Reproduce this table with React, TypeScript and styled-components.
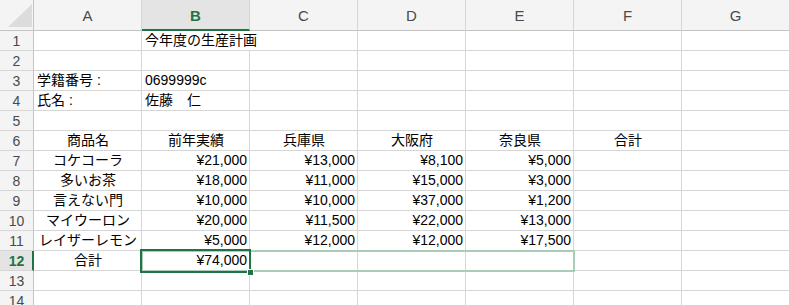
import React from "react";
import styled, { createGlobalStyle } from "styled-components";

const GlobalStyle = createGlobalStyle`
  html, body {
    margin: 0;
    padding: 0;
    background: #ffffff;
    overflow: hidden;
  }
  body {
    font-family: "Liberation Sans", "Noto Sans CJK JP", sans-serif;
  }
`;

const EXCEL_GREEN = "#217346";
const GRID = "#d6d6d6";

const Sheet = styled.div`
  position: relative;
  display: grid;
  grid-template-columns: 34px repeat(7, 108px);
  grid-template-rows: 31px repeat(14, 20px);
  width: 790px;
  height: 311px;
  background: #ffffff;
`;

const Corner = styled.div`
  position: relative;
  background: #f4f4f4;
  border-right: 1px solid #c4c4c4;
  border-bottom: 1px solid #c4c4c4;
  &::after {
    content: "";
    position: absolute;
    right: 1px;
    bottom: 3px;
    width: 24px;
    height: 23px;
    background: #dcdcdc;
    clip-path: polygon(100% 0, 100% 100%, 0 100%);
  }
`;

const ColHead = styled.div<{ $active?: boolean }>`
  display: flex;
  align-items: center;
  justify-content: center;
  background: ${(p) => (p.$active ? "#e4e4e4" : "#f4f4f4")};
  border-right: 1px solid ${GRID};
  border-bottom: ${(p) => (p.$active ? `2px solid ${EXCEL_GREEN}` : "1px solid #c4c4c4")};
  color: ${(p) => (p.$active ? EXCEL_GREEN : "#4a4a4a")};
  font-family: "Liberation Sans", sans-serif;
  font-size: 15px;
  font-weight: ${(p) => (p.$active ? 700 : 400)};
  padding-top: 1px;
  box-sizing: border-box;
`;

const RowHead = styled.div<{ $active?: boolean }>`
  display: flex;
  align-items: center;
  justify-content: center;
  background: ${(p) => (p.$active ? "#e4e4e4" : "#f4f4f4")};
  border-right: ${(p) => (p.$active ? `2px solid ${EXCEL_GREEN}` : "1px solid #c4c4c4")};
  border-bottom: 1px solid ${GRID};
  color: ${(p) => (p.$active ? EXCEL_GREEN : "#4a4a4a")};
  font-family: "Liberation Sans", sans-serif;
  font-size: 14px;
  font-weight: ${(p) => (p.$active ? 700 : 400)};
  padding-left: ${(p) => (p.$active ? "1px" : "0")};
  box-sizing: border-box;
`;

type Align = "left" | "center" | "right";

const Cell = styled.div<{ $align?: Align; $spill?: boolean }>`
  position: relative;
  z-index: ${(p) => (p.$spill ? 1 : 0)};
  display: flex;
  align-items: flex-end;
  justify-content: ${(p) =>
    p.$align === "right" ? "flex-end" : p.$align === "center" ? "center" : "flex-start"};
  padding: 0 2px 1px 3px;
  border-right: ${(p) => (p.$spill ? "none" : `1px solid ${GRID}`)};
  border-bottom: 1px solid ${GRID};
  box-sizing: border-box;
  color: #000000;
  font-size: 14px;
  line-height: 18px;
  white-space: nowrap;
  overflow: ${(p) => (p.$spill ? "visible" : "hidden")};
`;

/* selected range B12:E12, laid over its grid area */
const Range = styled.div`
  position: absolute;
  grid-column: 3 / 7;
  grid-row: 13 / 14;
  inset: -1px -1px -1px -1px;
  border: 2px solid #a9cdb8;
  pointer-events: none;
  z-index: 2;
`;

/* active cell B12 with the fill handle */
const ActiveCell = styled.div`
  position: absolute;
  grid-column: 3 / 4;
  grid-row: 13 / 14;
  inset: -2px -1px -2px -2px;
  border: 2px solid ${EXCEL_GREEN};
  pointer-events: none;
  z-index: 3;
`;

const FillHandle = styled.span`
  position: absolute;
  right: -5px;
  bottom: -5px;
  width: 5px;
  height: 5px;
  background: ${EXCEL_GREEN};
  border: 1px solid #ffffff;
`;

const COLS = ["A", "B", "C", "D", "E", "F", "G"];

type CellData = { text: string; align?: Align; spill?: boolean };

const products: [string, string, string, string, string][] = [
  ["コケコーラ", "¥21,000", "¥13,000", "¥8,100", "¥5,000"],
  ["多いお茶", "¥18,000", "¥11,000", "¥15,000", "¥3,000"],
  ["言えない門", "¥10,000", "¥10,000", "¥37,000", "¥1,200"],
  ["マイウーロン", "¥20,000", "¥11,500", "¥22,000", "¥13,000"],
  ["レイザーレモン", "¥5,000", "¥12,000", "¥12,000", "¥17,500"],
];

const rows: (CellData | null)[][] = [
  [null, { text: "今年度の生産計画", spill: true }],
  [],
  [{ text: "学籍番号 :" }, { text: "0699999c" }],
  [{ text: "氏名 :" }, { text: "佐藤　仁" }],
  [],
  ["商品名", "前年実績", "兵庫県", "大阪府", "奈良県", "合計"].map((t) => ({
    text: t,
    align: "center" as Align,
  })),
  ...products.map(([name, ...nums]) => [
    { text: name, align: "center" as Align },
    ...nums.map((n) => ({ text: n, align: "right" as Align })),
  ]),
  [
    { text: "合計", align: "center" },
    { text: "¥74,000", align: "right" },
  ],
  [],
  [],
];

const App = () => {
  return (
    <>
      <GlobalStyle />
      <Sheet>
        <Corner />
        {COLS.map((c) => (
          <ColHead key={c} $active={c === "B"}>
            {c}
          </ColHead>
        ))}
        {rows.map((row, r) => (
          <React.Fragment key={r}>
            <RowHead $active={r === 11}>{r + 1}</RowHead>
            {COLS.map((c, i) => {
              const cell = row[i];
              return (
                <Cell key={c} $align={cell?.align} $spill={cell?.spill}>
                  {cell?.text}
                </Cell>
              );
            })}
          </React.Fragment>
        ))}
        <Range />
        <ActiveCell>
          <FillHandle />
        </ActiveCell>
      </Sheet>
    </>
  );
};

export default App;
